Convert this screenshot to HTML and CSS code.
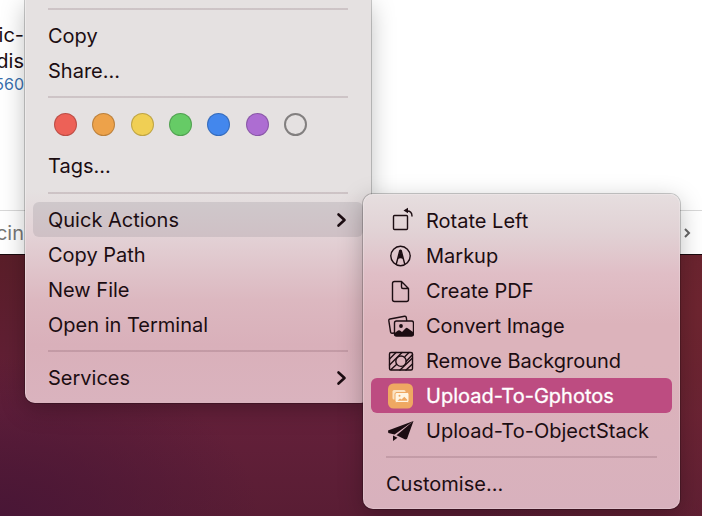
FILE: index.html
```html
<!DOCTYPE html>
<html lang="en">
<head>
<meta charset="utf-8">
<title>Finder</title>
<link rel="stylesheet" href="styles.css">
</head>
<body>
<main class="finder">
  <div class="files">
    <p class="file-name"><span>ic-</span></p>
    <p class="file-name"><span>dis</span></p>
    <p class="file-info"><span>560</span></p>
  </div>
  <footer class="path-bar">
    <span class="crumb"><span>cin</span></span>
    <svg class="crumb-arrow" viewBox="0 0 8 12"><path d="M2 2l4 4-4 4"/></svg>
  </footer>
</main>

<nav class="menu context">
  <hr>
  <button class="item">Copy</button>
  <button class="item">Share...</button>
  <hr>
  <div class="tags">
    <button class="tag red" aria-label="Red"></button>
    <button class="tag orange" aria-label="Orange"></button>
    <button class="tag yellow" aria-label="Yellow"></button>
    <button class="tag green" aria-label="Green"></button>
    <button class="tag blue" aria-label="Blue"></button>
    <button class="tag purple" aria-label="Purple"></button>
    <button class="tag none" aria-label="No colour"></button>
  </div>
  <button class="item">Tags...</button>
  <hr>
  <button class="item open">Quick Actions<svg class="arrow" viewBox="0 0 12 18"><path d="M2.500 3.500l6 5.500-6 5.500"/></svg></button>
  <button class="item">Copy Path</button>
  <button class="item">New File</button>
  <button class="item">Open in Terminal</button>
  <hr>
  <button class="item">Services<svg class="arrow" viewBox="0 0 12 18"><path d="M2.500 3.500l6 5.500-6 5.500"/></svg></button>
</nav>

<nav class="menu submenu">
  <button class="item">
    <svg class="icon" viewBox="0 0 28 28"><rect x="7.500" y="8.500" width="14" height="14" rx="1"/><path d="M21 4c3.200 0 5 2 5 5"/><path class="solid" d="M17.500 3.500l4.500-2.800v5.600z"/></svg>Rotate Left</button>
  <button class="item">
    <svg class="icon" viewBox="0 0 28 28"><circle cx="14.500" cy="14" r="9.700"/><path d="M10.300 22l3.500-13.500h1.400L18.700 22"/><path class="solid" d="M14.500 7l2.800 10q-2.800-1.300-5.600 0z"/></svg>Markup</button>
  <button class="item">
    <svg class="icon" viewBox="0 0 28 28"><path d="M8.500 4.500h7l7 7v11a2 2 0 0 1-2 2h-12a2 2 0 0 1-2-2v-16a2 2 0 0 1 2-2zM15.500 4.500v5.500a1.500 1.500 0 0 0 1.500 1.500h5.500"/></svg>Create PDF</button>
  <button class="item">
    <svg class="icon" viewBox="0 0 28 28"><path d="M8.500 21l-2.300.3a1.500 1.500 0 0 1-1.600-1.200L2.800 8.700a1.500 1.500 0 0 1 1.200-1.700l14.600-2.700a1.500 1.500 0 0 1 1.700 1.200l.4 3"/><rect x="8.500" y="9" width="19" height="15" rx="2"/><circle class="solid" cx="15" cy="14" r="1.900"/><path class="solid" d="M9 23v-2.200l3-2.300q1-.7 2 0l2 1.500 3.700-3.700q1-.9 2 0L27 20v3q-.5 1-1.500 1H10q-1 0-1-1z"/></svg>Convert Image</button>
  <button class="item">
    <svg class="icon" viewBox="0 0 28 28"><rect x="3.500" y="5.500" width="23" height="17.500" rx="1.500"/><circle cx="15" cy="14.200" r="5.200"/><path d="M3.500 12l6.500-6.500M3.500 18L16 5.500M5 22.500l5.500-5M19 9.500l4-4M20.200 14.200l6.300-6.400M14 23L26.500 11M20 23l6.500-6"/></svg>Remove Background</button>
  <button class="item selected">
    <svg class="icon" viewBox="0 0 28 28"><rect class="app" x="2" y="1.500" width="25" height="25" rx="5.500"/><rect class="photo-back" x="6.500" y="8" width="13" height="9.500" rx="1.500"/><rect class="photo" x="9" y="10.500" width="14" height="10" rx="1.500"/><path class="hill" d="M11.500 18.800l2.500-2.300 1.500 1 2.800-2.700 3 3v1z"/><circle class="hill" cx="13.500" cy="13.700" r="1"/></svg>Upload-To-Gphotos</button>
  <button class="item">
    <svg class="icon" viewBox="0 0 28 28"><path class="plane" d="M27.500 4L2 13.500l.3 2.500 6.200 1.500zM27.500 4L10.500 18.300l8.700 4.200 1.800-.5zM7 18.500l4.500 2.300L7 24z"/></svg>Upload-To-ObjectStack</button>
  <hr>
  <button class="item">Customise...</button>
</nav>
</body>
</html>
```

FILE: styles.css
```css
* { box-sizing: border-box; }

body {
  margin: 0;
  min-height: 100vh;
  overflow: hidden;
  font-family: Inter, "Liberation Sans", sans-serif;
  font-size: 20px;
  color: #1c0d12;
  background:
    radial-gradient(ellipse 260px 160px at 0 100%, #491636, transparent),
    radial-gradient(ellipse 300px 300px at 100% 60%, #6e2530, transparent),
    linear-gradient(#5a1e29 50%, #64203a 80%, #591d34);
}

button {
  margin: 0;
  padding: 0;
  border: 0;
  background: none;
  font: inherit;
  color: inherit;
}

/* Window behind the menus */
.finder {
  display: flex;
  flex-direction: column;
  background: #fff;
  border-bottom: 1px solid #1a0a0e;
}

.files {
  height: 210px;
  padding-top: 22px;
}

.files p {
  display: flex;
  justify-content: flex-end;
  width: 24px;
  margin: 0;
  line-height: 26px;
}

.files .file-info {
  font-size: 16px;
  line-height: 20px;
  color: #3a70ae;
}

.path-bar {
  display: flex;
  align-items: center;
  justify-content: space-between;
  height: 44px;
  padding-right: 11px;
  border-top: 1px solid #d8d8d8;
  color: #777;
}

.crumb {
  display: flex;
  justify-content: flex-end;
  width: 24px;
}

.crumb-arrow {
  width: 8px;
  height: 12px;
  fill: none;
  stroke: #666;
  stroke-width: 2;
}

/* Menus */
.menu {
  position: absolute;
  display: flex;
  flex-direction: column;
  padding: 8px;
  border-radius: 10px;
}

.context {
  top: 0;
  left: 25px;
  min-width: 346px;
  padding-top: 0;
  border-radius: 0 0 10px 10px;
  background: linear-gradient(#e5e1e1 190px, #e3d2d6 235px, #dcb8c0 300px, #d9b0ba 345px, #dab3be);
  box-shadow: 0 0 0 1px rgba(0, 0, 0, .2), 0 6px 24px rgba(0, 0, 0, .25), inset 1px 0 rgba(255, 255, 255, .3);
}

.submenu {
  top: 194px;
  left: 363px;
  min-width: 317px;
  padding-top: 9px;
  background: linear-gradient(#e6dedf, #e1d1d4 40px, #e0bec6 80px, #dcb3bb 130px, #dcb3bb 170px, #d8b1bd);
  box-shadow: 0 0 0 1px rgba(0, 0, 0, .2), 0 6px 24px rgba(0, 0, 0, .25), inset 0 0 0 1px rgba(255, 255, 255, .2);
}

hr {
  width: auto;
  height: 18px;
  margin: 0 15px;
  border: 0;
  background: linear-gradient(rgba(70, 30, 45, .15), rgba(70, 30, 45, .15)) center / 100% 2px no-repeat;
}

.item {
  display: flex;
  align-items: center;
  height: 35px;
  padding: 0 15px;
  border-radius: 6px;
  text-align: left;
  white-space: nowrap;
}

.open { background: linear-gradient(#cfc8cb, #cfc0c5); }

.selected {
  background: #bd4c81;
  color: #fff;
  -webkit-text-stroke: 0.3px #fff;
}

.arrow {
  width: 12px;
  height: 18px;
  margin-left: auto;
  fill: none;
  stroke: currentColor;
  stroke-width: 2.6;
  stroke-linecap: round;
  stroke-linejoin: round;
}

.tags {
  display: flex;
  justify-content: space-between;
  height: 42px;
  padding: 7px 56px 0 21px;
}

.tags + .item { margin-bottom: 1px; }

.tag {
  width: 23px;
  height: 23px;
  border: 1px solid rgba(0, 0, 0, .2);
  border-radius: 50%;
}

.red { background: #ed6157; }
.orange { background: #eda24a; }
.yellow { background: #f0cf54; }
.green { background: #66cb66; }
.blue { background: #4387ed; }
.purple { background: #ad6dd2; }
.none { border: 2px solid #827f7f; }

.icon {
  width: 28px;
  height: 28px;
  margin-right: 12px;
  fill: none;
  stroke: #1c0d12;
  stroke-width: 1.4;
  stroke-linejoin: round;
  stroke-linecap: round;
}

.icon .solid,
.icon .plane { fill: #1c0d12; stroke: none; }
.icon .app { fill: #efa862; stroke: none; }
.icon .photo-back { fill: #fbe2c2; stroke: none; }
.icon .photo { fill: #fff4e2; stroke: #efa862; stroke-width: 1; }
.icon .hill { fill: #efa862; stroke: none; }
```
